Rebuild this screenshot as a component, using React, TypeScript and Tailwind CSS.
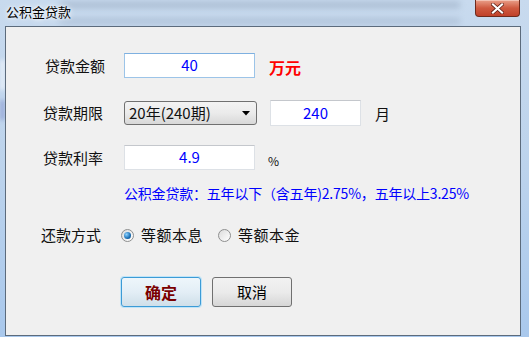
import { useState } from "react";

const cjk = { fontFamily: '"Noto Sans CJK SC", "Liberation Sans", sans-serif' };

const Radio = ({ checked }: { checked: boolean }) => (
  <span className="relative inline-flex size-[13px] items-center justify-center rounded-full border border-[#8e8f8f] bg-gradient-to-br from-[#dcdcdc] to-[#ffffff]">
    {checked && (
      <span className="size-[7px] rounded-full bg-[radial-gradient(circle_at_35%_35%,#8fd3ff,#1a6fb5_60%,#0b3d6b)]" />
    )}
  </span>
);

const Field = ({ value, w, focus }: { value: string; w: string; focus?: boolean }) => (
  <div
    className={`${w} h-[25px] flex items-center justify-center bg-white border text-[15px] text-[#0000ff] ${
      focus ? "border-[#9cc4e8] border-t-[#7eb0e0]" : "border-[#dde1e6] border-t-[#c4c7cc]"
    }`}
  >
    {value}
  </div>
);

export default function App() {
  const [mode, setMode] = useState(0);

  return (
    <div
      className="relative w-[529px] h-[337px] overflow-hidden flex flex-col bg-gradient-to-b from-[#c8daee] via-[#bcd3ec] to-[#a9c8ec]"
      style={cjk}
    >
      {/* blurred desktop behind the glass frame */}
      <div className="absolute left-[60px] top-[2px] w-[400px] h-[6px] bg-[#7c8fa8] opacity-40 blur-[3px]" />
      <div className="absolute left-[60px] top-[18px] w-[400px] h-[6px] bg-[#7c8fa8] opacity-30 blur-[3px]" />
      <div className="absolute left-0 top-[60px] w-[5px] h-[30px] bg-[#eef3fa] opacity-80 blur-[2px]" />
      <div className="absolute left-0 top-[100px] w-[5px] h-[20px] bg-[#8b9ad0] opacity-70 blur-[2px]" />

      <div className="relative h-[26px] shrink-0 flex items-start">
        <span className="mt-[4px] ml-[6px] text-[13px] leading-[16px] text-black [text-shadow:0_0_6px_#ffffff,0_0_3px_#ffffff]">
          公积金贷款
        </span>
        <button className="ml-auto mr-[9px] w-[45px] h-[17px] flex items-center justify-center rounded-b-[4px] border border-t-0 border-[#6e2a1c] bg-gradient-to-b from-[#e9a08a] via-[#cf5a40] to-[#c0412a] shadow-[inset_0_1px_0_#f3c2b3]">
          <svg width="13" height="11" viewBox="0 0 13 11">
            <path d="M2 1.5 L11 9.5 M11 1.5 L2 9.5" stroke="#5a1a10" strokeWidth="3.6" strokeLinecap="square" />
            <path d="M2 1.5 L11 9.5 M11 1.5 L2 9.5" stroke="#ffffff" strokeWidth="2.2" strokeLinecap="square" />
          </svg>
        </button>
      </div>

      <div className="relative flex-1 ml-[5px] mr-[8px] mb-[1px] border border-[#5c6b7c] bg-[#f0f0f0] text-[15px] text-[#111]">
        <div className="flex flex-col pl-[39px]">
          <div className="mt-[26px] h-[25px] flex items-center">
            <span className="w-[79px] pt-[2px]">贷款金额</span>
            <Field value="40" w="w-[131px]" focus />
            <span className="ml-[14px] pt-[2px] text-[16px] font-bold text-[#ff0000]">万元</span>
          </div>

          <div className="mt-[22px] h-[26px] flex items-center">
            <span className="w-[79px] -ml-[2px]">贷款期限</span>
            <div className="ml-[2px] w-[133px] h-[24px] flex items-center justify-between rounded-[3px] border border-[#707070] bg-gradient-to-b from-[#f3f3f3] via-[#ebebeb] to-[#d8d8d8] pl-[4px] pr-[6px]">
              <span className="text-[15px] leading-[18px]">20年(240期)</span>
              <svg width="8" height="5" viewBox="0 0 8 5">
                <path d="M0 0 H8 L4 4.5 Z" fill="#000" />
              </svg>
            </div>
            <div className="ml-[13px]">
              <Field value="240" w="w-[91px] h-[26px]" />
            </div>
            <span className="ml-[14px] pt-[2px]">月</span>
          </div>

          <div className="mt-[19px] h-[25px] flex items-center">
            <span className="w-[79px] -ml-[2px] mr-[2px] pt-[2px]">贷款利率</span>
            <Field value="4.9" w="w-[131px]" />
            <span className="ml-[13px] pt-[6px] text-[12px]">%</span>
          </div>

          <div className="mt-[15px] ml-[79px] h-[16px] flex items-center text-[14px] tracking-[-0.2px] text-[#0000ff] whitespace-nowrap">
            公积金贷款：五年以下（含五年)2.75%，五年以上3.25%
          </div>

          <div className="mt-[25px] h-[18px] flex items-center">
            <span className="w-[76px] -ml-[4px] mr-[4px]">还款方式</span>
            <label className="flex items-center gap-[7px] cursor-default" onClick={() => setMode(0)}>
              <Radio checked={mode === 0} />
              <span className="tracking-[0.5px]">等额本息</span>
            </label>
            <label className="ml-[15px] flex items-center gap-[7px] cursor-default" onClick={() => setMode(1)}>
              <Radio checked={mode === 1} />
              <span className="tracking-[0.5px]">等额本金</span>
            </label>
          </div>

          <div className="mt-[33px] ml-[76px] flex gap-[11px]">
            <button className="w-[80px] h-[30px] rounded-[3px] border border-[#3c9bd6] bg-gradient-to-b from-[#eef6fb] via-[#e3eef6] to-[#cfdfe9] shadow-[0_0_0_1px_#bfe4f8] text-[16px] font-bold text-[#7b0000]">
              确定
            </button>
            <button className="w-[80px] h-[30px] rounded-[3px] border border-[#707070] bg-gradient-to-b from-[#f2f2f2] via-[#ebebeb] to-[#d6d6d6] text-[15px] text-black">
              取消
            </button>
          </div>
        </div>
      </div>
    </div>
  );
}
